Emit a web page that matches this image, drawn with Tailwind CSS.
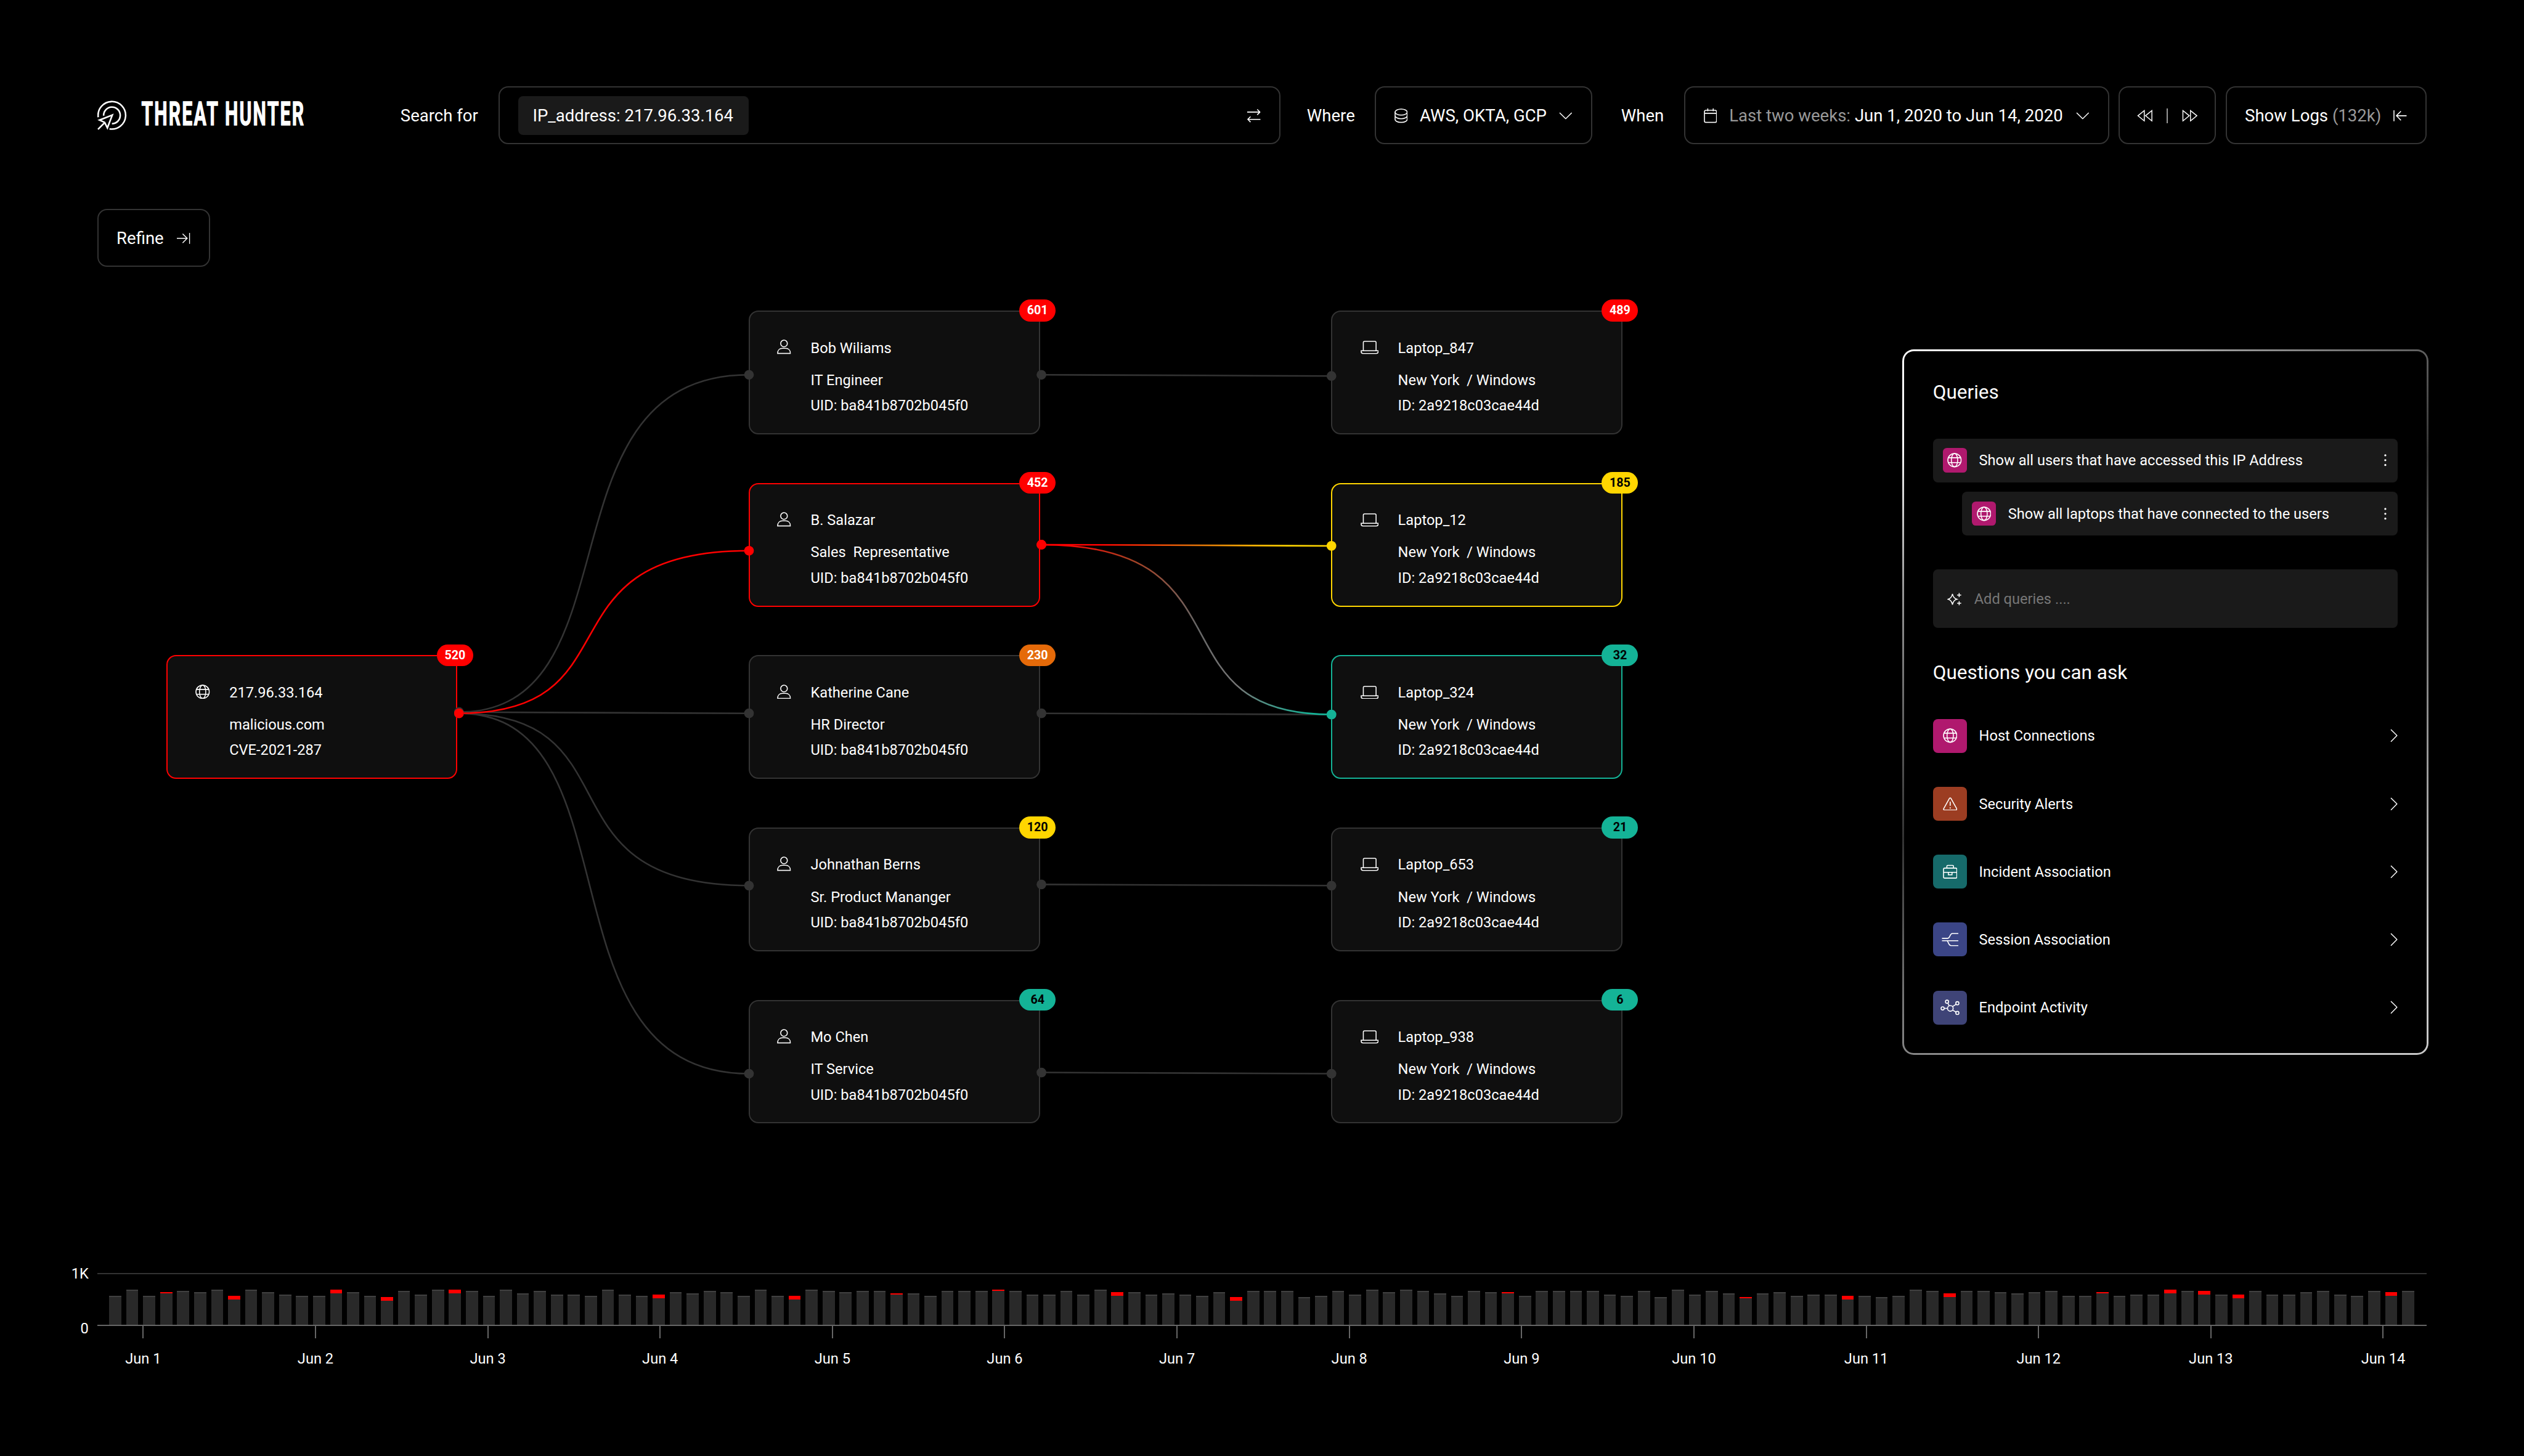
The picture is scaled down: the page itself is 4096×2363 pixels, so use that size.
<!DOCTYPE html>
<html lang="en" class="text-[31.508px]">
<head>
    <meta charset="UTF-8">
    <meta name="viewport" content="width=device-width, initial-scale=1.0">
    <title>Threat Hunter</title>
    <script src="https://cdn.jsdelivr.net/npm/@tailwindcss/browser@4"></script>
</head>
<body class="h-screen overflow-hidden bg-black text-white font-[Roboto,sans-serif]">
    <!-- Icon sprite -->
    <svg class="hidden">
        <symbol id="globe" viewBox="0 0 24 24"><circle cx="12" cy="12" r="11"/><ellipse cx="12" cy="12" rx="5.2" ry="11"/><path d="M2 8h20M2 16h20"/></symbol>
        <symbol id="user" viewBox="0 0 24 24"><circle cx="12.500" cy="6.500" r="5.500"/><path d="M2 23v-.5c0-4.800 3.200-8 8-8h5c4.800 0 8 3.200 8 8v.5z"/></symbol>
        <symbol id="laptop" viewBox="0 0 30 22"><path d="M4.500 16V3a2 2 0 0 1 2-2h17a2 2 0 0 1 2 2v13M1 16.500h28V18a3 3 0 0 1-3 3H4a3 3 0 0 1-3-3z"/></symbol>
        <symbol id="db" viewBox="0 0 22 24"><ellipse cx="11" cy="6" rx="10" ry="5"/><path d="M1 6v12c0 2.800 4.500 5 10 5s10-2.200 10-5V6M1 12c0 2.800 4.500 5 10 5s10-2.200 10-5"/></symbol>
        <symbol id="calendar" viewBox="0 0 22 24"><rect x="1" y="3" width="20" height="20" rx="2.500"/><path d="M1 8h20M6.500 0v4.500M15.500 0v4.500"/></symbol>
        <symbol id="swap" viewBox="0 0 22 23"><path d="M0 5.500h21M16.500 1l4.500 4.500-4.500 4.500M22 17.500H1M5.500 13L1 17.500 5.500 22"/></symbol>
        <symbol id="down" viewBox="0 0 22 12"><path d="M1 1l10 10L21 1"/></symbol>
        <symbol id="right" viewBox="0 0 12 22"><path d="M1 1l10 10L1 21"/></symbol>
        <symbol id="rewind" viewBox="0 0 26 20"><path d="M12 1.500v17L1.500 10zM24.500 1.500v17L14 10z"/></symbol>
        <symbol id="forward" viewBox="0 0 26 20"><path d="M14 1.500v17L24.500 10zM1.500 1.500v17L12 10z"/></symbol>
        <symbol id="toRight" viewBox="0 0 22 20"><path d="M0 10h17M9.500 2.500L17 10l-7.500 7.500M21 1v18"/></symbol>
        <symbol id="toLeft" viewBox="0 0 22 20"><path d="M22 10H5M12.500 2.500L5 10l7.500 7.500M1 1v18"/></symbol>
        <symbol id="sparkle" viewBox="0 0 25 22"><path d="M9 1.500c1 5 3 8 7.500 9.200C12 12 10 15 9 20c-1-5-3-8-7.500-9.300C6 9.500 8 6.500 9 1.500zM20.500 0v7M17 3.500h7M20.500 14v7M17 17.500h7"/></symbol>
        <symbol id="alert" viewBox="0 0 24 22"><path d="M10.800 1.700a1.400 1.400 0 0 1 2.400 0l9.500 17a1.500 1.500 0 0 1-1.300 2.300H2.600a1.500 1.500 0 0 1-1.300-2.300zM12 7v7M12 16.500v2"/></symbol>
        <symbol id="briefcase" viewBox="0 0 24 23"><rect x="1" y="5.500" width="22" height="16.500" rx="2"/><path d="M6.500 5V2.500A1.500 1.500 0 0 1 8 1h8a1.500 1.500 0 0 1 1.500 1.500V5M1 12.500h22M9 12.500v4h6v-4"/></symbol>
        <symbol id="session" viewBox="0 0 28 22"><path d="M.5 9H10c4 0 3.200-8 7.500-8h10M.5 13h27M8.500 13c2.500 0 2.500 8 7 8h12"/></symbol>
        <symbol id="endpoint" viewBox="0 0 31 25"><circle cx="15.800" cy="14.200" r="4.500"/><circle cx="10.500" cy="3.500" r="2.500"/><circle cx="27" cy="6" r="2.500"/><circle cx="3.500" cy="14.200" r="2.500"/><circle cx="27" cy="21.500" r="2.500"/><path d="M13.800 10l-2-4.300M19.300 11.300l5.700-3.700M6 14.200h5.300M19.500 17l5.300 3"/></symbol>
    </svg>

    <!-- Top bar -->
    <header class="flex items-center h-12 mt-17.75 pl-20 text-sm">
        <svg class="w-62.5 h-12 shrink-0" viewBox="0 0 500 96" fill="none" stroke="#fff">
            <g stroke-width="2.600" transform="translate(0 24)">
                <path d="M1.400 27A22.700 22.700 0 1 1 20 46.300"/>
                <path d="M10.300 24.500A13.700 13.700 0 1 1 24 37.700"/>
                <path d="M24.700 23.300L3.500 31.800l8.500 3.800 4.500 9z"/>
                <path d="M12.500 35.500L1 47"/>
            </g>
            <text transform="translate(72.500 64) scale(0.558 1)" textLength="480" lengthAdjust="spacing" fill="#fff" stroke-width="1.300" class="text-[55px] font-bold">THREAT HUNTER</text>
        </svg>
        <div class="w-20.25 pt-[2px]">Search for</div>
        <div class="flex items-center justify-between w-161 h-12 pl-3.75 pr-3.75 border-2 border-[#333] rounded-lg">
            <div class="flex items-center h-8 w-47.5 pt-[2px] pl-3 bg-[#1a1a1a] rounded">IP_address: 217.96.33.164</div>
            <svg class="w-2.75 h-3 mt-[2px]" fill="none" stroke="#fff" stroke-width="1.600"><use href="#swap"/></svg>
        </div>
        <div class="w-19.5 pl-5.5 pt-[2px]">Where</div>
        <div class="flex items-center w-44.75 h-12 pt-[2px] pl-3.75 border-2 border-[#333] rounded-lg">
            <svg class="w-2.75 h-3" fill="none" stroke="#fff" stroke-width="1.600"><use href="#db"/></svg>
            <span class="ml-2.5">AWS, OKTA, GCP</span>
            <svg class="w-2.75 h-1.5 ml-2.5" fill="none" stroke="#fff" stroke-width="1.500"><use href="#down"/></svg>
        </div>
        <div class="w-19 pl-6 pt-[2px]">When</div>
        <div class="flex items-center w-87.5 h-12 pt-[2px] pl-3.75 border-2 border-[#333] rounded-lg">
            <svg class="w-2.75 h-3" fill="none" stroke="#fff" stroke-width="1.600"><use href="#calendar"/></svg>
            <span class="ml-2.5"><span class="text-[#999]">Last two weeks:</span> Jun 1, 2020 to Jun 14, 2020</span>
            <svg class="w-2.75 h-1.5 ml-2.75" fill="none" stroke="#fff" stroke-width="1.500"><use href="#down"/></svg>
        </div>
        <div class="flex items-center justify-between w-20 h-12 ml-2 pt-[2px] px-3.5 border-2 border-[#333] rounded-lg">
            <svg class="w-3.25 h-2.5" fill="none" stroke="#fff" stroke-width="1.500"><use href="#rewind"/></svg>
            <div class="w-[2px] h-3 bg-[#999]"></div>
            <svg class="w-3.25 h-2.5" fill="none" stroke="#fff" stroke-width="1.500"><use href="#forward"/></svg>
        </div>
        <div class="flex items-center w-41.5 h-12 ml-2 pt-[2px] pl-3.75 border-2 border-[#333] rounded-lg">
            Show Logs&nbsp;<span class="text-[#999]">(132k)</span>
            <svg class="w-2.75 h-2.5 ml-2.5" fill="none" stroke="#fff" stroke-width="1.600"><use href="#toLeft"/></svg>
        </div>
    </header>

    <button class="flex items-center w-23.25 h-12 mt-13.25 ml-20 pt-[2px] pl-3.75 border-2 border-[#333] rounded-lg text-sm">
        Refine
        <svg class="w-2.75 h-2.5 ml-2.75" fill="none" stroke="#fff" stroke-width="1.500"><use href="#toRight"/></svg>
    </button>

    <main class="flex pl-20">
        <!-- Graph -->
        <div id="graph" class="relative w-[92.960rem] h-205 shrink-0"></div>

        <!-- Queries panel -->
        <aside class="w-[27.120rem] h-[36.340rem] mt-17 p-[3px] rounded-[0.600rem] bg-[linear-gradient(144deg,#fff_8%,#999_22%,#333_45%,#777_60%,#c8c8c8_90%)]">
            <div class="h-full pt-[1.370rem] pl-6 rounded-[0.500rem] bg-black">
                <h2 class="text-base leading-6">Queries</h2>
                <div class="flex items-center w-95.75 h-9 mt-6.5 px-2 rounded bg-[#1a1a1a] text-xs">
                    <div class="flex items-center justify-center size-5 rounded-[0.200rem] bg-[#b0196e]">
                        <svg class="size-3" fill="none" stroke="#fff" stroke-width="1.600"><use href="#globe"/></svg>
                    </div>
                    <span class="ml-2.5 pt-[2px]">Show all users that have accessed this IP Address</span>
                    <svg class="w-1 h-3 ml-auto" viewBox="0 0 8 24" fill="#fff"><circle cx="4" cy="4" r="1.700"/><circle cx="4" cy="12" r="1.700"/><circle cx="4" cy="20" r="1.700"/></svg>
                </div>
                <div class="flex items-center w-89.75 h-9 mt-2 ml-6 px-2 rounded bg-[#1a1a1a] text-xs">
                    <div class="flex items-center justify-center size-5 rounded-[0.200rem] bg-[#b0196e]">
                        <svg class="size-3" fill="none" stroke="#fff" stroke-width="1.600"><use href="#globe"/></svg>
                    </div>
                    <span class="ml-2.5 pt-[2px]">Show all laptops that have connected to the users</span>
                    <svg class="w-1 h-3 ml-auto" viewBox="0 0 8 24" fill="#fff"><circle cx="4" cy="4" r="1.700"/><circle cx="4" cy="12" r="1.700"/><circle cx="4" cy="20" r="1.700"/></svg>
                </div>
                <div class="flex items-center w-95.75 h-12 mt-7 pl-3 pt-[2px] rounded bg-[#1a1a1a] text-xs text-[#777]">
                    <svg class="w-3 h-2.75" fill="none" stroke="#fff" stroke-width="1.600"><use href="#sparkle"/></svg>
                    <span class="ml-2.5">Add queries ....</span>
                </div>
                <h2 class="mt-6.25 text-base leading-6">Questions you can ask</h2>
                <div id="questions" class="flex flex-col gap-7 w-95.75 mt-6.5 text-xs"></div>
            </div>
        </aside>
    </main>

    <!-- Timeline -->
    <section class="flex mt-0.5">
        <div class="flex flex-col justify-between w-20 h-15.25 pr-1.75 text-right text-xs">
            <span>1K</span>
            <span>0</span>
        </div>
        <div class="w-480 pt-1.75">
            <div id="bars" class="flex items-end gap-1 h-11 pl-2.5 border-t-2 border-b-2 border-t-[#333] border-b-[#666]"></div>
            <div id="days" class="flex w-497 -ml-8.25 text-xs"></div>
        </div>
    </section>

    <script>
        const badgeStyle = {
            red: "bg-[#ff0000] text-white",
            orange: "bg-[#e56a09] text-white",
            yellow: "bg-[#ffd600] text-black",
            teal: "bg-[#14b397] text-black",
        };

        const borderStyle = {
            gray: "border-[#333]",
            red: "border-[#ff0000]",
            yellow: "border-[#ffd600]",
            teal: "border-[#14b397]",
        };

        // left padding, icon box and text offset differ by icon
        const iconStyle = {
            globe: ["pl-5.75", "w-3 h-3 mt-1", "ml-4"],
            user: ["pl-5.5", "w-3 h-3 mt-1", "ml-4"],
            laptop: ["pl-5.75", "w-3.75 h-2.75 mt-1.25", "ml-4"],
        };

        const nodes = [
            { x: 57, y: 320, icon: "globe", lines: ["217.96.33.164", "malicious.com", "CVE-2021-287"], count: 520, badge: "red", border: "red" },
            { x: 537, y: 36, icon: "user", lines: ["Bob Wiliams", "IT Engineer", "UID: ba841b8702b045f0"], count: 601, badge: "red", border: "gray" },
            { x: 537, y: 178, icon: "user", lines: ["B. Salazar", "Sales&nbsp; Representative", "UID: ba841b8702b045f0"], count: 452, badge: "red", border: "red" },
            { x: 537, y: 320, icon: "user", lines: ["Katherine Cane", "HR Director", "UID: ba841b8702b045f0"], count: 230, badge: "orange", border: "gray" },
            { x: 537, y: 462, icon: "user", lines: ["Johnathan Berns", "Sr. Product Mananger", "UID: ba841b8702b045f0"], count: 120, badge: "yellow", border: "gray" },
            { x: 537, y: 604, icon: "user", lines: ["Mo Chen", "IT Service", "UID: ba841b8702b045f0"], count: 64, badge: "teal", border: "gray" },
            { x: 1017, y: 36, icon: "laptop", lines: ["Laptop_847", "New York&nbsp; / Windows", "ID: 2a9218c03cae44d"], count: 489, badge: "red", border: "gray" },
            { x: 1017, y: 178, icon: "laptop", lines: ["Laptop_12", "New York&nbsp; / Windows", "ID: 2a9218c03cae44d"], count: 185, badge: "yellow", border: "yellow" },
            { x: 1017, y: 320, icon: "laptop", lines: ["Laptop_324", "New York&nbsp; / Windows", "ID: 2a9218c03cae44d"], count: 32, badge: "teal", border: "teal" },
            { x: 1017, y: 462, icon: "laptop", lines: ["Laptop_653", "New York&nbsp; / Windows", "ID: 2a9218c03cae44d"], count: 21, badge: "teal", border: "gray" },
            { x: 1017, y: 604, icon: "laptop", lines: ["Laptop_938", "New York&nbsp; / Windows", "ID: 2a9218c03cae44d"], count: 6, badge: "teal", border: "gray" },
        ];

        // [x1, y1, x2, y2, stroke, color of start dot, color of end dot]
        const links = [
            [756, 1174, 1234, 618, "#333", "#333", "#333"],
            [756, 1174, 1234, 1176, "#333", "#333", "#333"],
            [756, 1176, 1234, 1460, "#333", "#333", "#333"],
            [756, 1176, 1234, 1770, "#333", "#333", "#333"],
            [756, 1176, 1234, 908, "#ff0000", "#ff0000", "#ff0000"],
            [1716, 618, 2194, 620, "#333", "#333", "#333"],
            [1716, 1176, 2194, 1178, "#333", "#333", "#333"],
            [1716, 1458, 2194, 1460, "#333", "#333", "#333"],
            [1716, 1768, 2194, 1770, "#333", "#333", "#333"],
            [1716, 898, 2194, 1178, "url(#toTeal)", "#ff0000", "#14b397"],
            [1716, 898, 2194, 900, "url(#toYellow)", "#ff0000", "#ffd600"],
        ];

        function curve([x1, y1, x2, y2]) {
            const [a, b] = x1 < 1000 ? [299, 353] : [353, 299];
            return `M${x1} ${y1}C${x1 + a} ${y1} ${x2 - b} ${y2} ${x2} ${y2}`;
        }

        function drawGraph() {
            const cards = nodes.map(n => {
                const [pad, box, gap] = iconStyle[n.icon];
                return `
                <div class="absolute w-60 h-25.5 border-2 rounded-lg bg-[#0f0f0f] text-xs ${borderStyle[n.border]}" style="left:${n.x / 16}rem;top:${n.y / 16}rem">
                    <div class="flex pt-4.75 ${pad}">
                        <svg class="${box}" fill="none" stroke="#fff" stroke-width="1.600"><use href="#${n.icon}"/></svg>
                        <div class="pt-[2px] ${gap}">
                            <p class="leading-5">${n.lines[0]}</p>
                            <p class="mt-1.5 leading-5.25">${n.lines[1]}</p>
                            <p class="leading-5.25">${n.lines[2]}</p>
                        </div>
                    </div>
                </div>`;
            }).join("");

            const lines = links.map(l => `<path d="${curve(l)}" stroke="${l[4]}"/>`).join("");
            const dots = links.map(l => `<circle cx="${l[0]}" cy="${l[1]}" r="8" fill="${l[5]}"/><circle cx="${l[2]}" cy="${l[3]}" r="8" fill="${l[6]}"/>`).join("");
            const svg = `
                <svg class="absolute left-0 top-0 w-320 h-205" viewBox="160 440 2560 1640">
                    <defs>
                        <linearGradient id="toYellow" gradientUnits="userSpaceOnUse" x1="1716" y1="0" x2="2194" y2="0">
                            <stop offset="0.200" stop-color="#ff0000"/><stop offset="0.500" stop-color="#e56a09"/><stop offset="0.850" stop-color="#ffd600"/>
                        </linearGradient>
                        <linearGradient id="toTeal" gradientUnits="userSpaceOnUse" x1="1716" y1="898" x2="2194" y2="1178">
                            <stop offset="0.050" stop-color="#ff0000"/><stop offset="0.250" stop-color="#a84022"/><stop offset="0.520" stop-color="#666"/><stop offset="0.720" stop-color="#777"/><stop offset="0.950" stop-color="#14b397"/>
                        </linearGradient>
                    </defs>
                    <g fill="none" stroke-width="2.600">${lines}</g>
                    ${dots}
                </svg>`;

            const badges = nodes.map(n => `
                <div class="absolute flex items-center justify-center w-7.5 h-4.5 rounded-full text-[0.625rem] font-bold ${badgeStyle[n.badge]}" style="left:${(n.x + 223) / 16}rem;top:${(n.y - 9) / 16}rem">${n.count}</div>`).join("");

            document.getElementById("graph").innerHTML = cards + svg + badges;
        }

        const questions = [
            ["Host Connections", "globe", "bg-[#b0196e]", "w-3 h-3"],
            ["Security Alerts", "alert", "bg-[#9c3d22]", "w-3 h-2.75"],
            ["Incident Association", "briefcase", "bg-[#166a6a]", "w-3 h-3"],
            ["Session Association", "session", "bg-[#3b4586]", "w-3.5 h-2.75"],
            ["Endpoint Activity", "endpoint", "bg-[#3f4477]", "w-4 h-3.25"],
        ];

        function drawQuestions() {
            document.getElementById("questions").innerHTML = questions.map(([label, icon, bg, size]) => `
                <div class="flex items-center h-7">
                    <div class="flex items-center justify-center size-7 rounded ${bg}">
                        <svg class="${size}" fill="none" stroke="#fff" stroke-width="1.600"><use href="#${icon}"/></svg>
                    </div>
                    <span class="ml-2.5 pt-[2px]">${label}</span>
                    <svg class="w-1.5 h-2.75 ml-auto" fill="none" stroke="#fff" stroke-width="1.500"><use href="#right"/></svg>
                </div>`).join("");
        }

        // total height of every bar, and the height of the red part for those that have alerts
        const heights = [
            24, 29, 24, 27, 28, 27, 29, 24, 29, 27, 25, 24, 24, 29, 27, 24, 23, 28, 25, 29, 29, 28, 24, 29, 26, 28, 25, 25, 24, 29,
            25, 24, 25, 27, 26, 28, 27, 24, 29, 24, 24, 29, 28, 27, 28, 28, 26, 26, 24, 28, 28, 28, 29, 28, 25, 25, 28, 25, 29, 27,
            27, 25, 26, 25, 24, 27, 23, 28, 28, 28, 23, 24, 28, 25, 29, 27, 29, 28, 26, 24, 28, 27, 27, 24, 28, 28, 28, 28, 25, 24,
            28, 23, 29, 25, 28, 26, 23, 26, 27, 24, 25, 25, 24, 24, 23, 24, 29, 28, 26, 28, 28, 27, 26, 27, 28, 24, 24, 27, 24, 25,
            25, 29, 28, 28, 25, 25, 28, 25, 25, 27, 28, 25, 24, 28, 27, 28,
        ];
        const alerts = { 3: 1, 7: 3, 13: 3, 16: 3, 20: 3, 32: 3, 40: 3, 46: 1, 52: 1, 59: 3, 66: 3, 82: 1, 96: 1, 102: 3, 108: 3, 117: 1, 121: 3, 123: 3, 125: 3, 134: 3 };

        function drawTimeline() {
            document.getElementById("bars").innerHTML = heights.map((h, i) => `
                <div class="w-2.5 shrink-0 bg-[#292929]" style="height:${h / 16}rem">
                    <div class="${alerts[i] ? "bg-[#ff0000]" : "bg-[#404040]"}" style="height:${(alerts[i] || 1) / 16}rem"></div>
                </div>`).join("");

            document.getElementById("days").innerHTML = Array.from({ length: 14 }, (_, i) => `
                <div class="flex flex-col items-center w-35.5 shrink-0">
                    <div class="w-[2px] h-2.5 bg-[#666]"></div>
                    <span class="mt-2.25">Jun ${i + 1}</span>
                </div>`).join("");
        }

        drawGraph();
        drawQuestions();
        drawTimeline();
    </script>
</body>
</html>
